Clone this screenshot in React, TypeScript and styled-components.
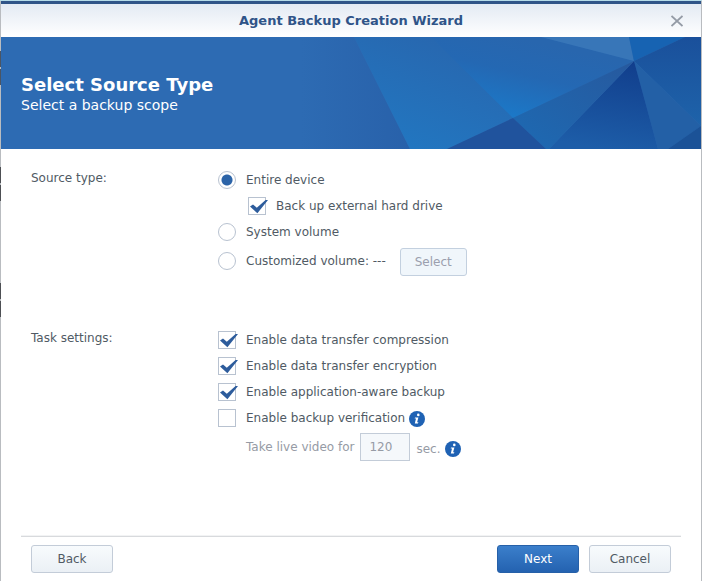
import React, { useState } from "react";
import styled, { createGlobalStyle, css } from "styled-components";

const GlobalStyle = createGlobalStyle`
  * { box-sizing: border-box; }
  body {
    margin: 0;
    color: #505a64;
    font: 12px/20px "DejaVu Sans", Verdana, sans-serif;
  }
  button, input { font: inherit; }
`;

const Backdrop = styled.div`
  display: flex;
  flex-direction: column;
  min-height: 100vh;
  padding: 1px 1px 0;
  background:
    linear-gradient(#b5dbe8, #b5dbe8) 0 0 / 100% 1px no-repeat,
    linear-gradient(#4a5564, #4a5564) 0 51px / 1px 16px no-repeat,
    linear-gradient(#4a5564, #4a5564) 0 69px / 1px 16px no-repeat,
    linear-gradient(#4d4f54, #4d4f54) 0 167px / 1px 16px no-repeat,
    linear-gradient(#4d4f54, #4d4f54) 0 185px / 1px 16px no-repeat,
    linear-gradient(#4d4f54, #4d4f54) 0 283px / 1px 16px no-repeat,
    linear-gradient(#4d4f54, #4d4f54) 0 301px / 1px 16px no-repeat,
    #b9bcc0;
`;

const Dialog = styled.main`
  display: flex;
  flex: 1;
  flex-direction: column;
  background: #fff;
`;

const TitleBar = styled.header`
  display: grid;
  grid-template-columns: 32px 1fr 32px;
  align-items: center;
  height: 36px;
  padding: 0 8px;
  border-top: 3px solid #2f5488;
  background: linear-gradient(#e3eaf3, #fff);
`;

const Title = styled.h1`
  grid-column: 2;
  margin: 0;
  color: #2f5488;
  font-size: 13px;
  line-height: 20px;
  text-align: center;
`;

const CloseButton = styled.button`
  display: grid;
  place-items: center;
  height: 24px;
  padding: 0;
  border: 0;
  background: none;
  color: #949ba6;
`;

const Banner = styled.section`
  display: grid;
  align-items: center;
  height: 112px;
  overflow: hidden;
  background: #2d6bb3;
  color: #fff;
  > * { grid-area: 1 / 1; }
`;

const BannerArt = styled.svg`
  display: block;
  justify-self: end;
  width: 400px;
  height: 112px;
`;

const BannerText = styled.div`
  z-index: 1;
  padding: 4px 20px 0;
`;

const BannerTitle = styled.h2`
  margin: 0;
  font-size: 18px;
  line-height: 20px;
`;

const BannerSubtitle = styled.p`
  margin: 0;
  font-size: 14px;
  line-height: 20px;
`;

const Form = styled.form`
  display: flex;
  flex: 1;
  flex-direction: column;
  gap: 50px;
  padding: 18px 30px;
`;

const Group = styled.div`
  display: grid;
  grid-template-columns: 187px 1fr;
`;

const GroupLabel = styled.div`
  line-height: 22px;
`;

const Row = styled.div<{ $indent?: boolean; $tall?: boolean }>`
  display: flex;
  align-items: center;
  height: ${(p) => (p.$tall ? 32 : 26)}px;
  padding-left: ${(p) => (p.$indent ? 30 : 0)}px;
`;

const Choice = styled.label`
  display: flex;
  align-items: center;
  gap: 10px;
`;

const Mark = styled.span`
  position: relative;
  display: block;
  width: 18px;
  height: 18px;
`;

const markBox = css`
  display: block;
  appearance: none;
  width: 18px;
  height: 18px;
  margin: 0;
  border: 1px solid #b8c2d0;
  background: #fff;
`;

const CheckInput = styled.input`
  ${markBox}
`;

const RadioInput = styled.input`
  ${markBox}
  border-radius: 50%;
  &:checked {
    background: radial-gradient(circle, #2c64a8 0 5px, #fff 6px);
  }
`;

const Tick = styled.svg`
  position: absolute;
  top: 0;
  left: 0;
  width: 20px;
  height: 18px;
  pointer-events: none;
`;

const Button = styled.button<{ $primary?: boolean; $small?: boolean }>`
  width: ${(p) => (p.$small ? 67 : 82)}px;
  height: 28px;
  padding: 0;
  border: 1px solid ${(p) => (p.$primary ? "#2660a8" : "#c3ccd8")};
  border-radius: 3px;
  background: ${(p) => (p.$primary ? "linear-gradient(#3b7fcb, #2462b0)" : "linear-gradient(#f8fbfd, #ebf0f5)")};
  color: ${(p) => (p.$primary ? "#fff" : "#505a64")};
  &:disabled {
    border-color: #c3d0df;
    background: #f0f6fb;
    color: #9b9fae;
  }
`;

const SelectSlot = styled.div`
  padding: 2px 0 0 14px;
`;

const Duration = styled.div`
  display: flex;
  align-items: center;
  gap: 6px;
  padding: 2px 0 0 28px;
  color: #969ba5;
`;

const NumberInput = styled.input`
  width: 50px;
  height: 28px;
  padding: 0 8px;
  border: 1px solid #c3ccd8;
  border-radius: 0;
  background: #f5f8fb;
  color: #969ba5;
`;

const Unit = styled.span`
  display: flex;
  align-items: center;
  gap: 4px;
  padding-top: 4px;
`;

const InfoButton = styled.button`
  display: block;
  width: 16px;
  height: 16px;
  padding: 0;
  border: 0;
  background: none;
  svg { display: block; }
`;

const InfoSlot = styled.span`
  padding: 2px 0 0 4px;
`;

const Footer = styled.footer`
  display: flex;
  gap: 10px;
  margin: 0 20px;
  padding: 8px 10px;
  border-top: 1px solid #d8dadd;
  box-shadow: 0 -1px 0 #f2f3f4;
`;

const Spacer = styled.div`
  flex: 1;
`;

function Check({ label, initial = false }: { label: string; initial?: boolean }) {
  const [on, setOn] = useState(initial);
  return (
    <Choice>
      <Mark>
        <CheckInput type="checkbox" checked={on} onChange={() => setOn(!on)} />
        {on && (
          <Tick viewBox="0 0 20 18" aria-hidden="true">
            <path d="M2 9.6 5 7.4 8.8 10.8 17.6 3 20 3 9.4 16.2Z" fill="#2d5c9c" />
          </Tick>
        )}
      </Mark>
      {label}
    </Choice>
  );
}

function Info({ label }: { label: string }) {
  return (
    <InfoButton type="button" aria-label={label}>
      <svg width="16" height="16" viewBox="0 0 16 16">
        <circle cx="8" cy="8" r="8" fill="#1f62b4" />
        <circle cx="9.3" cy="3.9" r="1.3" fill="#fff" />
        <path d="M6 6.4h3.4L8.1 11.3h1.3l-.5 1.2H5.8L7 7.6H5.7Z" fill="#fff" />
      </svg>
    </InfoButton>
  );
}

function Facets() {
  return (
    <BannerArt viewBox="0 0 400 112" aria-hidden="true">
      <defs>
        <linearGradient id="fade" x1="0" x2="1">
          <stop offset="0" stopColor="#2d6bb3" />
          <stop offset="1" stopColor="#2861aa" />
        </linearGradient>
        <linearGradient id="wide" gradientUnits="userSpaceOnUse" x1="215" y1="0" x2="195" y2="84">
          <stop offset="0" stopColor="#2866ae" />
          <stop offset="0.4" stopColor="#2468b3" />
          <stop offset="1" stopColor="#1a7bcb" />
        </linearGradient>
        <linearGradient id="left" gradientUnits="userSpaceOnUse" x1="160" y1="0" x2="115" y2="112">
          <stop offset="0" stopColor="#2866ae" />
          <stop offset="1" stopColor="#2276c0" />
        </linearGradient>
        <linearGradient id="band" x1="1" y1="0" x2="0" y2="1">
          <stop offset="0" stopColor="#27599e" />
          <stop offset="1" stopColor="#1d6ab3" />
        </linearGradient>
        <linearGradient id="deep" x1="0.7" y1="0" x2="0.5" y2="1">
          <stop offset="0" stopColor="#113e8c" />
          <stop offset="1" stopColor="#1d5da8" />
        </linearGradient>
        <linearGradient id="right" x1="0" y1="0" x2="0" y2="1">
          <stop offset="0" stopColor="#1a509b" />
          <stop offset="1" stopColor="#1e63aa" />
        </linearGradient>
      </defs>
      <path d="M0 0H53L109 112H0Z" fill="url(#fade)" />
      <path d="M53 0H240L333 24 146 112H109Z" fill="url(#left)" />
      <path d="M130 0H240L333 24 212 81Z" fill="url(#wide)" />
      <path d="M240 0H328L333 24Z" fill="#3876b8" />
      <path d="M328 0H384L333 24Z" fill="#1763b2" />
      <path d="M384 0H400V89L333 24Z" fill="url(#right)" />
      <path d="M333 24 400 89 367 112H357Z" fill="#2360a6" />
      <path d="M367 112 400 89V112Z" fill="#1b5297" />
      <path d="M333 24 248 112H357Z" fill="url(#deep)" />
      <path d="M333 24 212 81 245 112H248Z" fill="url(#band)" />
      <path d="M212 81 146 112H245Z" fill="#20539d" />
    </BannerArt>
  );
}

export default function App() {
  const [source, setSource] = useState("device");
  const radio = (value: string, label: string) => (
    <Choice>
      <RadioInput type="radio" name="source" checked={source === value} onChange={() => setSource(value)} />
      {label}
    </Choice>
  );

  return (
    <Backdrop>
      <GlobalStyle />
      <Dialog>
        <TitleBar>
          <Title>Agent Backup Creation Wizard</Title>
          <CloseButton type="button" aria-label="Close">
            <svg width="12" height="12" viewBox="0 0 12 12" fill="none" stroke="currentColor" strokeWidth="1.8">
              <path d="M.5 1 11.5 11M11.5 1 .5 11" />
            </svg>
          </CloseButton>
        </TitleBar>
        <Banner>
          <Facets />
          <BannerText>
            <BannerTitle>Select Source Type</BannerTitle>
            <BannerSubtitle>Select a backup scope</BannerSubtitle>
          </BannerText>
        </Banner>
        <Form onSubmit={(e) => e.preventDefault()}>
          <Group role="radiogroup" aria-labelledby="source-label">
            <GroupLabel id="source-label">Source type:</GroupLabel>
            <div>
              <Row>{radio("device", "Entire device")}</Row>
              <Row $indent><Check label="Back up external hard drive" initial /></Row>
              <Row>{radio("system", "System volume")}</Row>
              <Row $tall>
                {radio("custom", "Customized volume: ---")}
                <SelectSlot>
                  <Button type="button" $small disabled={source !== "custom"}>Select</Button>
                </SelectSlot>
              </Row>
            </div>
          </Group>
          <Group role="group" aria-labelledby="task-label">
            <GroupLabel id="task-label">Task settings:</GroupLabel>
            <div>
              <Row><Check label="Enable data transfer compression" initial /></Row>
              <Row><Check label="Enable data transfer encryption" initial /></Row>
              <Row><Check label="Enable application-aware backup" initial /></Row>
              <Row>
                <Check label="Enable backup verification" />
                <InfoSlot><Info label="About backup verification" /></InfoSlot>
              </Row>
              <Duration>
                <label htmlFor="duration">Take live video for</label>
                <NumberInput id="duration" type="text" defaultValue="120" disabled />
                <Unit>sec. <Info label="About live video" /></Unit>
              </Duration>
            </div>
          </Group>
        </Form>
        <Footer>
          <Button type="button">Back</Button>
          <Spacer />
          <Button type="button" $primary>Next</Button>
          <Button type="button">Cancel</Button>
        </Footer>
      </Dialog>
    </Backdrop>
  );
}
